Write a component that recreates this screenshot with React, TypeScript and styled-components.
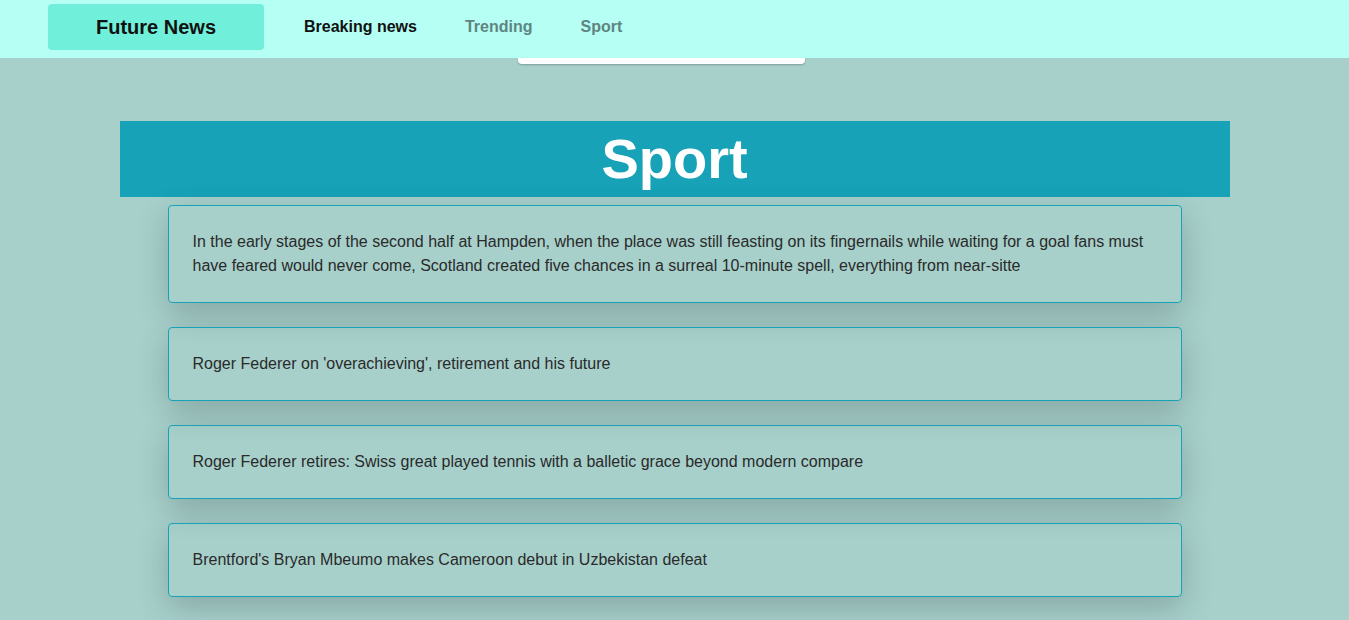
import React from "react";
import styled, { createGlobalStyle } from "styled-components";

const GlobalStyle = createGlobalStyle`
  * { box-sizing: border-box; }
  body {
    margin: 0;
    background: #a7d0cb;
    font-family: "Liberation Sans", Arial, sans-serif;
    color: #212529;
  }
`;

const NavBar = styled.nav`
  height: 58px;
  background: #b5fff5;
  display: flex;
  align-items: center;
  padding-left: 48px;
`;

const Logo = styled.div`
  width: 216px;
  height: 46px;
  margin-top: -4px;
  background: #70efda;
  border-radius: 4px;
  display: flex;
  align-items: center;
  justify-content: center;
  font-size: 20px;
  font-weight: 700;
  color: #111;
`;

const NavLinks = styled.div`
  display: flex;
  gap: 48px;
  margin-left: 40px;
  margin-top: -4px;
`;

const NavLink = styled.a<{ $active?: boolean }>`
  font-size: 16px;
  font-weight: 700;
  text-decoration: none;
  color: ${(p) => (p.$active ? "#111" : "#5e8580")};
`;

const SearchStub = styled.div`
  width: 287px;
  height: 6px;
  margin-left: 518px;
  background: #fff;
  border-radius: 0 0 4px 4px;
  box-shadow: 0 1px 2px rgba(0, 0, 0, 0.25);
`;

const Container = styled.main`
  width: 1110px;
  margin: 57px auto 0;
`;

const Banner = styled.h1`
  margin: 0;
  height: 76px;
  background: #17a2b8;
  color: #fff;
  font-size: 56px;
  font-weight: 700;
  line-height: 76px;
  text-align: center;
`;

const CardList = styled.div`
  display: flex;
  flex-direction: column;
  gap: 24px;
  padding: 8px 48px 24px;
`;

const Card = styled.article`
  border: 1px solid #17a2b8;
  border-radius: 4px;
  padding: 24px;
  font-size: 16px;
  line-height: 24px;
  color: #2a2a2a;
  box-shadow: 0 10px 32px rgba(0, 0, 0, 0.2);
`;

const stories = [
  "In the early stages of the second half at Hampden, when the place was still feasting on its fingernails while waiting for a goal fans must have feared would never come, Scotland created five chances in a surreal 10-minute spell, everything from near-sitte",
  "Roger Federer on 'overachieving', retirement and his future",
  "Roger Federer retires: Swiss great played tennis with a balletic grace beyond modern compare",
  "Brentford's Bryan Mbeumo makes Cameroon debut in Uzbekistan defeat",
];

export default function App() {
  return (
    <>
      <GlobalStyle />
      <NavBar>
        <Logo>Future News</Logo>
        <NavLinks>
          <NavLink $active href="#">Breaking news</NavLink>
          <NavLink href="#">Trending</NavLink>
          <NavLink href="#">Sport</NavLink>
        </NavLinks>
      </NavBar>
      <SearchStub />
      <Container>
        <Banner>Sport</Banner>
        <CardList>
          {stories.map((s, i) => (
            <Card key={i}>{s}</Card>
          ))}
        </CardList>
      </Container>
    </>
  );
}
